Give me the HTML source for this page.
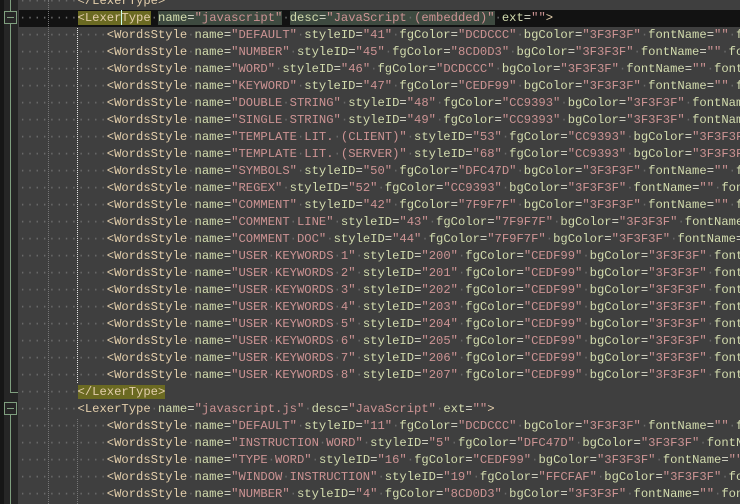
<!DOCTYPE html>
<html><head><meta charset="utf-8"><style>
html,body{margin:0;padding:0;width:740px;height:504px;overflow:hidden;}
body{background:#3f3f3f;position:relative;font-family:"Liberation Mono",monospace;font-size:12.2px;}
#mg{position:absolute;left:0;top:0;width:18px;height:504px;background:#262626;}
#mg0{position:absolute;left:0;top:0;width:4px;height:504px;background:#161616;}
.vl{position:absolute;left:10px;width:1px;background:#7f9f7f;z-index:2;}
.box{position:absolute;left:4px;width:11px;height:11px;border:1px solid #7f9f7f;background:#262626;z-index:3;}
.box:after{content:"";position:absolute;left:2px;top:5px;width:7px;height:1px;background:#7f9f7f;}
#txt{position:absolute;left:19px;top:-7px;color:#dcdccc;width:721px;overflow:hidden;}
.l{height:17px;line-height:17px;position:relative;white-space:pre;}
.cur{background:#121212;margin-left:-19px;padding-left:19px;}
i{font-style:normal;color:#6a6a6a;}
b{font-weight:normal;color:#e3ceab;}
u{text-decoration:none;color:#d3dcae;}
s{text-decoration:none;color:#cc9393;}
.hl{background:#6b6a22;}
.hg{background:#3e4a40;}
.g{position:absolute;width:0;border-left:1px dotted #777;z-index:2;}
.gw{border-left-color:#e8e8e8;}
.caret{display:inline-block;width:1px;height:15px;background:#cfe;vertical-align:middle;margin-right:-1px;}
</style></head><body>
<div id="mg"></div><div id="mg0"></div>
<div id="txt"><div class="l"><i>········</i><b>&lt;/LexerType&gt;</b></div><div class="l cur"><i>········</i><b class="hl">&lt;Lexer<span class="caret"></span>Type</b><i>·</i><span class="hg"><u>name</u>=<s>"javascript"</s></span><i>·</i><span class="hg"><u>desc</u>=<s>"JavaScript<i>·</i>(embedded)"</s></span><i>·</i><u>ext</u>=<s>""</s><b>&gt;</b></div><div class="l"><i>············</i><b>&lt;WordsStyle</b><i>·</i><u>name</u>=<s>"DEFAULT"</s><i>·</i><u>styleID</u>=<s>"41"</s><i>·</i><u>fgColor</u>=<s>"DCDCCC"</s><i>·</i><u>bgColor</u>=<s>"3F3F3F"</s><i>·</i><u>fontName</u>=<s>""</s><i>·</i><u>fontStyle</u>=<s>"0"</s></div><div class="l"><i>············</i><b>&lt;WordsStyle</b><i>·</i><u>name</u>=<s>"NUMBER"</s><i>·</i><u>styleID</u>=<s>"45"</s><i>·</i><u>fgColor</u>=<s>"8CD0D3"</s><i>·</i><u>bgColor</u>=<s>"3F3F3F"</s><i>·</i><u>fontName</u>=<s>""</s><i>·</i><u>fontStyle</u>=<s>"0"</s></div><div class="l"><i>············</i><b>&lt;WordsStyle</b><i>·</i><u>name</u>=<s>"WORD"</s><i>·</i><u>styleID</u>=<s>"46"</s><i>·</i><u>fgColor</u>=<s>"DCDCCC"</s><i>·</i><u>bgColor</u>=<s>"3F3F3F"</s><i>·</i><u>fontName</u>=<s>""</s><i>·</i><u>fontStyle</u>=<s>"0"</s></div><div class="l"><i>············</i><b>&lt;WordsStyle</b><i>·</i><u>name</u>=<s>"KEYWORD"</s><i>·</i><u>styleID</u>=<s>"47"</s><i>·</i><u>fgColor</u>=<s>"CEDF99"</s><i>·</i><u>bgColor</u>=<s>"3F3F3F"</s><i>·</i><u>fontName</u>=<s>""</s><i>·</i><u>fontStyle</u>=<s>"0"</s></div><div class="l"><i>············</i><b>&lt;WordsStyle</b><i>·</i><u>name</u>=<s>"DOUBLE<i>·</i>STRING"</s><i>·</i><u>styleID</u>=<s>"48"</s><i>·</i><u>fgColor</u>=<s>"CC9393"</s><i>·</i><u>bgColor</u>=<s>"3F3F3F"</s><i>·</i><u>fontName</u>=<s>""</s></div><div class="l"><i>············</i><b>&lt;WordsStyle</b><i>·</i><u>name</u>=<s>"SINGLE<i>·</i>STRING"</s><i>·</i><u>styleID</u>=<s>"49"</s><i>·</i><u>fgColor</u>=<s>"CC9393"</s><i>·</i><u>bgColor</u>=<s>"3F3F3F"</s><i>·</i><u>fontName</u>=<s>""</s></div><div class="l"><i>············</i><b>&lt;WordsStyle</b><i>·</i><u>name</u>=<s>"TEMPLATE<i>·</i>LIT.<i>·</i>(CLIENT)"</s><i>·</i><u>styleID</u>=<s>"53"</s><i>·</i><u>fgColor</u>=<s>"CC9393"</s><i>·</i><u>bgColor</u>=<s>"3F3F3F"</s></div><div class="l"><i>············</i><b>&lt;WordsStyle</b><i>·</i><u>name</u>=<s>"TEMPLATE<i>·</i>LIT.<i>·</i>(SERVER)"</s><i>·</i><u>styleID</u>=<s>"68"</s><i>·</i><u>fgColor</u>=<s>"CC9393"</s><i>·</i><u>bgColor</u>=<s>"3F3F3F"</s></div><div class="l"><i>············</i><b>&lt;WordsStyle</b><i>·</i><u>name</u>=<s>"SYMBOLS"</s><i>·</i><u>styleID</u>=<s>"50"</s><i>·</i><u>fgColor</u>=<s>"DFC47D"</s><i>·</i><u>bgColor</u>=<s>"3F3F3F"</s><i>·</i><u>fontName</u>=<s>""</s><i>·</i><u>fontStyle</u>=<s>"0"</s></div><div class="l"><i>············</i><b>&lt;WordsStyle</b><i>·</i><u>name</u>=<s>"REGEX"</s><i>·</i><u>styleID</u>=<s>"52"</s><i>·</i><u>fgColor</u>=<s>"CC9393"</s><i>·</i><u>bgColor</u>=<s>"3F3F3F"</s><i>·</i><u>fontName</u>=<s>""</s><i>·</i><u>fontStyle</u>=<s>"0"</s></div><div class="l"><i>············</i><b>&lt;WordsStyle</b><i>·</i><u>name</u>=<s>"COMMENT"</s><i>·</i><u>styleID</u>=<s>"42"</s><i>·</i><u>fgColor</u>=<s>"7F9F7F"</s><i>·</i><u>bgColor</u>=<s>"3F3F3F"</s><i>·</i><u>fontName</u>=<s>""</s><i>·</i><u>fontStyle</u>=<s>"0"</s></div><div class="l"><i>············</i><b>&lt;WordsStyle</b><i>·</i><u>name</u>=<s>"COMMENT<i>·</i>LINE"</s><i>·</i><u>styleID</u>=<s>"43"</s><i>·</i><u>fgColor</u>=<s>"7F9F7F"</s><i>·</i><u>bgColor</u>=<s>"3F3F3F"</s><i>·</i><u>fontName</u>=<s>""</s></div><div class="l"><i>············</i><b>&lt;WordsStyle</b><i>·</i><u>name</u>=<s>"COMMENT<i>·</i>DOC"</s><i>·</i><u>styleID</u>=<s>"44"</s><i>·</i><u>fgColor</u>=<s>"7F9F7F"</s><i>·</i><u>bgColor</u>=<s>"3F3F3F"</s><i>·</i><u>fontName</u>=<s>""</s></div><div class="l"><i>············</i><b>&lt;WordsStyle</b><i>·</i><u>name</u>=<s>"USER<i>·</i>KEYWORDS<i>·</i>1"</s><i>·</i><u>styleID</u>=<s>"200"</s><i>·</i><u>fgColor</u>=<s>"CEDF99"</s><i>·</i><u>bgColor</u>=<s>"3F3F3F"</s><i>·</i><u>fontName</u>=<s>""</s></div><div class="l"><i>············</i><b>&lt;WordsStyle</b><i>·</i><u>name</u>=<s>"USER<i>·</i>KEYWORDS<i>·</i>2"</s><i>·</i><u>styleID</u>=<s>"201"</s><i>·</i><u>fgColor</u>=<s>"CEDF99"</s><i>·</i><u>bgColor</u>=<s>"3F3F3F"</s><i>·</i><u>fontName</u>=<s>""</s></div><div class="l"><i>············</i><b>&lt;WordsStyle</b><i>·</i><u>name</u>=<s>"USER<i>·</i>KEYWORDS<i>·</i>3"</s><i>·</i><u>styleID</u>=<s>"202"</s><i>·</i><u>fgColor</u>=<s>"CEDF99"</s><i>·</i><u>bgColor</u>=<s>"3F3F3F"</s><i>·</i><u>fontName</u>=<s>""</s></div><div class="l"><i>············</i><b>&lt;WordsStyle</b><i>·</i><u>name</u>=<s>"USER<i>·</i>KEYWORDS<i>·</i>4"</s><i>·</i><u>styleID</u>=<s>"203"</s><i>·</i><u>fgColor</u>=<s>"CEDF99"</s><i>·</i><u>bgColor</u>=<s>"3F3F3F"</s><i>·</i><u>fontName</u>=<s>""</s></div><div class="l"><i>············</i><b>&lt;WordsStyle</b><i>·</i><u>name</u>=<s>"USER<i>·</i>KEYWORDS<i>·</i>5"</s><i>·</i><u>styleID</u>=<s>"204"</s><i>·</i><u>fgColor</u>=<s>"CEDF99"</s><i>·</i><u>bgColor</u>=<s>"3F3F3F"</s><i>·</i><u>fontName</u>=<s>""</s></div><div class="l"><i>············</i><b>&lt;WordsStyle</b><i>·</i><u>name</u>=<s>"USER<i>·</i>KEYWORDS<i>·</i>6"</s><i>·</i><u>styleID</u>=<s>"205"</s><i>·</i><u>fgColor</u>=<s>"CEDF99"</s><i>·</i><u>bgColor</u>=<s>"3F3F3F"</s><i>·</i><u>fontName</u>=<s>""</s></div><div class="l"><i>············</i><b>&lt;WordsStyle</b><i>·</i><u>name</u>=<s>"USER<i>·</i>KEYWORDS<i>·</i>7"</s><i>·</i><u>styleID</u>=<s>"206"</s><i>·</i><u>fgColor</u>=<s>"CEDF99"</s><i>·</i><u>bgColor</u>=<s>"3F3F3F"</s><i>·</i><u>fontName</u>=<s>""</s></div><div class="l"><i>············</i><b>&lt;WordsStyle</b><i>·</i><u>name</u>=<s>"USER<i>·</i>KEYWORDS<i>·</i>8"</s><i>·</i><u>styleID</u>=<s>"207"</s><i>·</i><u>fgColor</u>=<s>"CEDF99"</s><i>·</i><u>bgColor</u>=<s>"3F3F3F"</s><i>·</i><u>fontName</u>=<s>""</s></div><div class="l"><i>········</i><b class="hl">&lt;/LexerType&gt;</b></div><div class="l"><i>········</i><b>&lt;LexerType</b><i>·</i><u>name</u>=<s>"javascript.js"</s><i>·</i><u>desc</u>=<s>"JavaScript"</s><i>·</i><u>ext</u>=<s>""</s><b>&gt;</b></div><div class="l"><i>············</i><b>&lt;WordsStyle</b><i>·</i><u>name</u>=<s>"DEFAULT"</s><i>·</i><u>styleID</u>=<s>"11"</s><i>·</i><u>fgColor</u>=<s>"DCDCCC"</s><i>·</i><u>bgColor</u>=<s>"3F3F3F"</s><i>·</i><u>fontName</u>=<s>""</s><i>·</i><u>fontStyle</u>=<s>"0"</s></div><div class="l"><i>············</i><b>&lt;WordsStyle</b><i>·</i><u>name</u>=<s>"INSTRUCTION<i>·</i>WORD"</s><i>·</i><u>styleID</u>=<s>"5"</s><i>·</i><u>fgColor</u>=<s>"DFC47D"</s><i>·</i><u>bgColor</u>=<s>"3F3F3F"</s><i>·</i><u>fontName</u>=<s>""</s></div><div class="l"><i>············</i><b>&lt;WordsStyle</b><i>·</i><u>name</u>=<s>"TYPE<i>·</i>WORD"</s><i>·</i><u>styleID</u>=<s>"16"</s><i>·</i><u>fgColor</u>=<s>"CEDF99"</s><i>·</i><u>bgColor</u>=<s>"3F3F3F"</s><i>·</i><u>fontName</u>=<s>""</s></div><div class="l"><i>············</i><b>&lt;WordsStyle</b><i>·</i><u>name</u>=<s>"WINDOW<i>·</i>INSTRUCTION"</s><i>·</i><u>styleID</u>=<s>"19"</s><i>·</i><u>fgColor</u>=<s>"FFCFAF"</s><i>·</i><u>bgColor</u>=<s>"3F3F3F"</s><i>·</i><u>fontName</u>=<s>""</s></div><div class="l"><i>············</i><b>&lt;WordsStyle</b><i>·</i><u>name</u>=<s>"NUMBER"</s><i>·</i><u>styleID</u>=<s>"4"</s><i>·</i><u>fgColor</u>=<s>"8CD0D3"</s><i>·</i><u>bgColor</u>=<s>"3F3F3F"</s><i>·</i><u>fontName</u>=<s>""</s><i>·</i><u>fontStyle</u>=<s>"0"</s></div></div>
<div class="vl" style="top:0;height:11px"></div>
<div class="vl" style="top:24px;height:369px"></div>
<div style="position:absolute;left:10px;top:392px;width:8px;height:1px;background:#7f9f7f;z-index:2"></div>
<div class="vl" style="top:415px;height:89px"></div>
<div class="box" style="top:11px"></div>
<div class="box" style="top:402px"></div>
<div class="g" style="left:48px;top:0;height:504px"></div>
<div class="g gw" style="left:77px;top:28px;height:355px"></div>
<div class="g" style="left:77px;top:419px;height:85px"></div>
</body></html>
